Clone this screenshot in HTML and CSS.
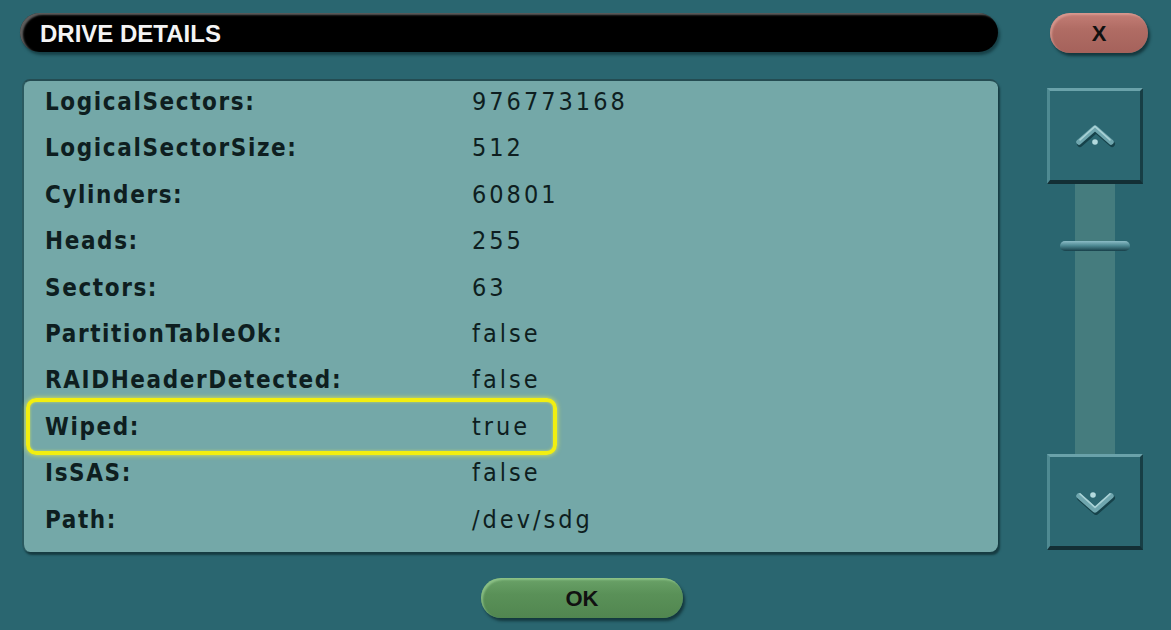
FILE: index.html
```html
<!DOCTYPE html>
<html>
<head>
<meta charset="utf-8">
<link rel="stylesheet" href="styles.css">
</head>
<body>
<div class="app">
  <div class="top">
    <div class="titlebar">DRIVE DETAILS</div>
    <div class="close">X</div>
  </div>
  <div class="middle">
    <div class="panel">
      <div class="row"><span class="lbl">LogicalSectors:</span><span class="val">976773168</span></div>
      <div class="row"><span class="lbl">LogicalSectorSize:</span><span class="val">512</span></div>
      <div class="row"><span class="lbl">Cylinders:</span><span class="val">60801</span></div>
      <div class="row"><span class="lbl">Heads:</span><span class="val">255</span></div>
      <div class="row"><span class="lbl">Sectors:</span><span class="val">63</span></div>
      <div class="row"><span class="lbl">PartitionTableOk:</span><span class="val">false</span></div>
      <div class="row"><span class="lbl">RAIDHeaderDetected:</span><span class="val">false</span></div>
      <div class="row highlight"><span class="lbl">Wiped:</span><span class="val">true</span></div>
      <div class="row"><span class="lbl">IsSAS:</span><span class="val">false</span></div>
      <div class="row"><span class="lbl">Path:</span><span class="val">/dev/sdg</span></div>
    </div>
    <div class="scroll">
      <div class="sbtn">
        <svg width="44" height="30" viewBox="0 0 44 30">
          <path d="M6 21 L22 7 L38 21" fill="none" stroke="#16424a" stroke-width="6" stroke-linecap="round" stroke-linejoin="round" transform="translate(1,2)"/>
          <path d="M6 21 L22 7 L38 21" fill="none" stroke="#6fa6ae" stroke-width="5.5" stroke-linecap="round" stroke-linejoin="round"/>
          <path d="M7 20 L22 6.5 L37 20" fill="none" stroke="#a9d2d6" stroke-width="1.6" stroke-linecap="round" stroke-linejoin="round" transform="translate(0,-1.2)"/>
          <circle cx="22" cy="21" r="2.8" fill="#b3dade"/>
        </svg>
      </div>
      <div class="track"><div class="thumb"></div></div>
      <div class="sbtn">
        <svg width="44" height="30" viewBox="0 0 44 30">
          <path d="M6 9 L22 23 L38 9" fill="none" stroke="#16424a" stroke-width="6" stroke-linecap="round" stroke-linejoin="round" transform="translate(1,2)"/>
          <path d="M6 9 L22 23 L38 9" fill="none" stroke="#6fa6ae" stroke-width="5.5" stroke-linecap="round" stroke-linejoin="round"/>
          <path d="M7 8 L22 21.5 L37 8" fill="none" stroke="#a9d2d6" stroke-width="1.6" stroke-linecap="round" stroke-linejoin="round" transform="translate(0,-1.2)"/>
          <circle cx="20" cy="8" r="2.8" fill="#b3dade"/>
        </svg>
      </div>
    </div>
  </div>
  <div class="bottom">
    <div class="ok">OK</div>
  </div>
</div>
</body>
</html>
```
FILE: styles.css
```css
html, body {
  margin: 0;
  padding: 0;
}
body {
  width: 1171px;
  height: 630px;
  overflow: hidden;
  background: #2a6670;
  font-family: "DejaVu Sans Condensed", "DejaVu Sans", sans-serif;
  font-stretch: condensed;
  color: #0e1e20;
}
.app {
  display: flex;
  flex-direction: column;
}
.top {
  display: flex;
  align-items: flex-start;
  padding: 13px 0 0 20px;
}
.titlebar {
  box-sizing: border-box;
  width: 978px;
  height: 39px;
  border-radius: 20px;
  background: #000;
  box-shadow: inset 3px 2px 2px rgba(170, 170, 170, 0.55), 2px 3px 3px rgba(10, 40, 45, 0.6);
  color: #f4f4f4;
  font-family: "Liberation Sans", Arial, sans-serif;
  font-weight: bold;
  font-size: 24px;
  line-height: 42px;
  padding-left: 20px;
}
.close {
  margin-left: 52px;
  width: 98px;
  height: 40px;
  border-radius: 20px;
  background: linear-gradient(#c47e76, #b06c64 40%, #a5625b);
  box-shadow: inset 2px 2px 2px rgba(230, 170, 160, 0.6), 2px 3px 3px rgba(10, 35, 40, 0.7);
  font-family: "Liberation Sans", Arial, sans-serif;
  font-weight: bold;
  font-size: 22px;
  line-height: 41px;
  text-align: center;
  color: #111;
}
.middle {
  display: flex;
  align-items: flex-start;
  margin-top: 28px;
  padding-left: 22px;
}
.panel {
  box-sizing: border-box;
  width: 976px;
  height: 473px;
  border-radius: 8px;
  background: #74a8a8;
  border-top: 2px solid #244c52;
  border-left: 2px solid #2a5a60;
  box-shadow: 2px 3px 2px #163c42;
  margin-top: -2px;
}
.row {
  position: relative;
  display: grid;
  grid-template-columns: 427px 1fr;
  padding-left: 21px;
  height: 46.4px;
  line-height: 42px;
  font-size: 24px;
  white-space: nowrap;
}
.lbl {
  font-weight: bold;
  letter-spacing: 1.6px;
}
.val {
  font-size: 25px;
  letter-spacing: 3px;
}
.highlight::after {
  content: "";
  position: absolute;
  left: 2px;
  top: -8px;
  width: 531px;
  height: 57px;
  box-sizing: border-box;
  border: 4.5px solid #f2ef10;
  border-radius: 10px;
  box-shadow: 0 0 5px rgba(250, 250, 60, 0.8), inset 0 0 3px rgba(250, 250, 60, 0.6);
}
.scroll {
  display: flex;
  flex-direction: column;
  align-items: center;
  margin-left: 49px;
  margin-top: 7px;
  width: 96px;
}
.sbtn {
  box-sizing: border-box;
  width: 96px;
  height: 96px;
  background: #2c6872;
  border-top: 3px solid #6aa2aa;
  border-left: 3px solid #4f8a92;
  border-right: 3px solid #173e45;
  border-bottom: 4px solid #132f35;
  display: flex;
  align-items: center;
  justify-content: center;
}
.track {
  position: relative;
  width: 40px;
  height: 270px;
  background: #457c7e;
}
.thumb {
  position: absolute;
  left: -15px;
  top: 57px;
  width: 70px;
  height: 10px;
  border-radius: 5px;
  background: linear-gradient(#8cbcc6, #4f8a94 45%, #17404a);
}
.bottom {
  display: flex;
  padding-left: 481px;
  margin-top: 26px;
}
.ok {
  width: 202px;
  height: 40px;
  border-radius: 20px;
  background: linear-gradient(#6aa268, #5a9158 40%, #518650);
  box-shadow: inset 2px 2px 2px rgba(170, 220, 160, 0.55), 2px 3px 3px rgba(10, 35, 40, 0.7);
  font-family: "Liberation Sans", Arial, sans-serif;
  font-weight: bold;
  font-size: 22px;
  line-height: 42px;
  text-align: center;
  color: #111;
}
```
